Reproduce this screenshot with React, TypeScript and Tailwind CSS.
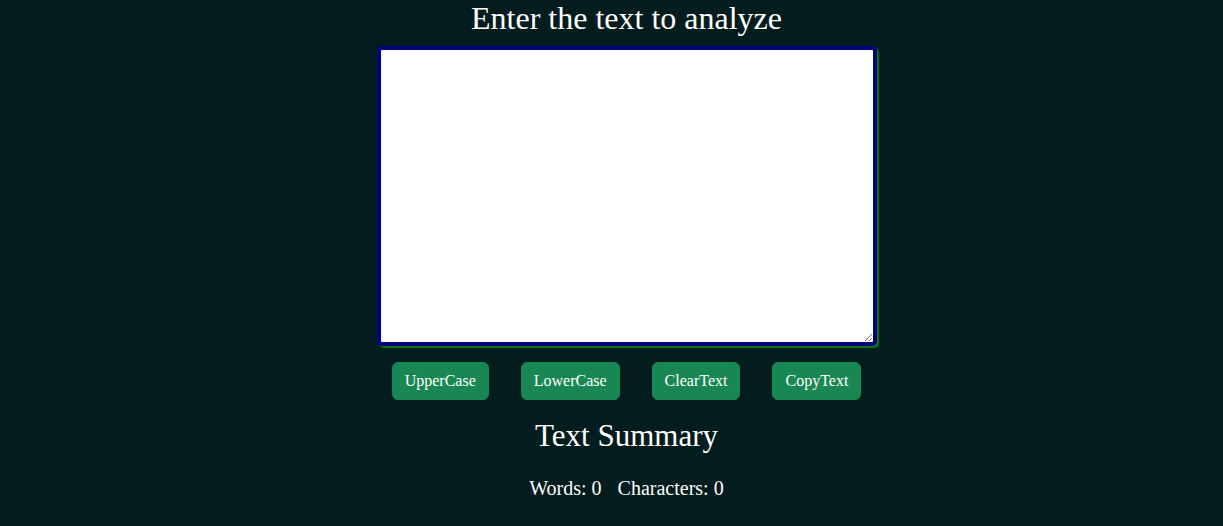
import { useState } from 'react';

export default function App() {
  const [text, setText] = useState('');

  const words = text.split(/\s+/).filter((w) => w.length > 0).length;

  const buttons = [
    { label: 'UpperCase', run: () => setText(text.toUpperCase()) },
    { label: 'LowerCase', run: () => setText(text.toLowerCase()) },
    { label: 'ClearText', run: () => setText('') },
    { label: 'CopyText', run: () => navigator.clipboard?.writeText(text) },
  ];

  return (
    <div className="min-h-[526px] bg-[#031c1e] text-white font-['Liberation_Serif',serif] flex flex-col items-center pl-[30px]">
      <h1 className="text-[32px] leading-[37px] mt-0">Enter the text to analyze</h1>

      <textarea
        value={text}
        onChange={(e) => setText(e.target.value)}
        className="mt-[9px] w-[500px] h-[300px] bg-white text-black border-4 border-[#000080] rounded-[5px] shadow-[2px_2px_1px_#0a7a0a] outline-none resize p-1"
      />

      {/* actions */}
      <div className="mt-4 flex gap-8">
        {buttons.map((b) => (
          <button
            key={b.label}
            onClick={b.run}
            className="h-[38px] px-3 rounded-[6px] border border-[#198754] bg-[#198754] text-[16px] leading-6 text-white"
          >
            {b.label}
          </button>
        ))}
      </div>

      <h2 className="mt-[17px] text-[31px] leading-[37px]">Text Summary</h2>
      <p className="mt-[23px] text-[20px] leading-[23px] flex gap-4">
        <span>Words: {words}</span>
        <span>Characters: {text.length}</span>
      </p>
    </div>
  );
}
